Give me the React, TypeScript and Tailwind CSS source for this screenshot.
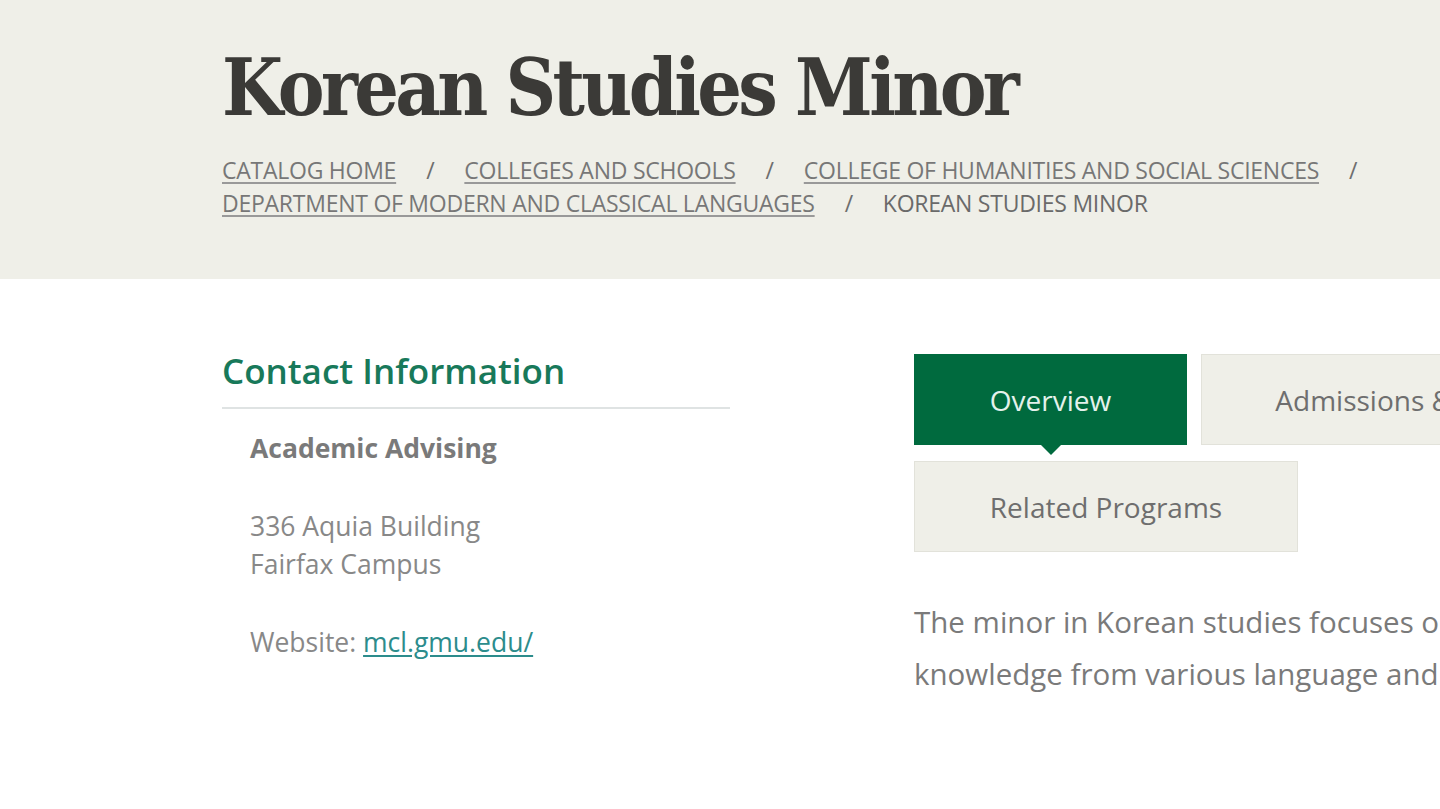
import React from "react";

const crumbs = [
  "CATALOG HOME",
  "COLLEGES AND SCHOOLS",
  "COLLEGE OF HUMANITIES AND SOCIAL SCIENCES",
  "DEPARTMENT OF MODERN AND CLASSICAL LANGUAGES",
];

function Sep() {
  return <span className="mx-[30px] text-[#6e6e6e] no-underline">/</span>;
}

export default function App() {
  return (
    <div className="w-[1440px] h-[809px] overflow-hidden bg-white" style={{ fontFamily: '"Open Sans", sans-serif' }}>
      <header className="h-[279px] bg-[#efefe8] pl-[222px] pt-[44px]">
        <h1
          className="text-[78px] leading-[88px] font-bold text-[#3b3a37] tracking-[-3.6px]"
          style={{ fontFamily: '"DejaVu Serif Condensed", "DejaVu Serif", serif' }}
        >
          Korean Studies Minor
        </h1>
        <nav className="mt-[22px] w-[1180px] text-[23px] leading-[33px] text-[#777] tracking-[-0.25px]">
          <a className="underline decoration-[#999] underline-offset-[3px]">{crumbs[0]}</a>
          <Sep />
          <a className="underline decoration-[#999] underline-offset-[3px]">{crumbs[1]}</a>
          <Sep />
          <a className="underline decoration-[#999] underline-offset-[3px]">{crumbs[2]}</a>
          <Sep />
          <br />
          <a className="underline decoration-[#999] underline-offset-[3px]">{crumbs[3]}</a>
          <Sep />
          <span className="text-[#6a6a6a]">KOREAN STUDIES MINOR</span>
        </nav>
      </header>
      <main className="flex pl-[222px] pt-[70px]">
        <aside className="w-[508px] shrink-0">
          <h2 className="text-[35px] leading-[44px] font-semibold text-[#18795a] pb-[14px] border-b-2 border-[#dfe3e3]">
            Contact Information
          </h2>
          <div className="pl-[28px] pt-[20px] text-[26.5px] text-[#888]">
            <p className="font-bold text-[#7a7a7a] leading-[38px]">Academic Advising</p>
            <p className="mt-[40px] leading-[38px]">
              336 Aquia Building
              <br />
              Fairfax Campus
            </p>
            <p className="mt-[40px] leading-[38px]">
              Website:{" "}
              <a className="text-[#2c8c8c] underline underline-offset-[3px]">mcl.gmu.edu/</a>
            </p>
          </div>
        </aside>
        <section className="ml-[184px] w-[900px] shrink-0 pt-[5px]">
          <div className="flex flex-wrap gap-x-[14px] gap-y-[16px] w-[760px]">
            <div className="relative w-[273px] h-[91px] bg-[#006a3e] flex items-center justify-center text-[28px] text-[#e4f2ec]">
              Overview
              <span className="absolute left-1/2 -translate-x-1/2 top-full w-0 h-0 border-l-[10px] border-r-[10px] border-t-[10px] border-l-transparent border-r-transparent border-t-[#006a3e]" />
            </div>
            <div className="w-[430px] h-[91px] bg-[#efefe8] border border-[#e2e2da] flex items-center justify-center text-[28px] text-[#6e6e6e] whitespace-nowrap">
              Admissions &amp; Policies
            </div>
            <div className="w-[384px] h-[91px] bg-[#efefe8] border border-[#e2e2da] flex items-center justify-center text-[28px] text-[#6e6e6e]">
              Related Programs
            </div>
          </div>
          <div className="mt-[44px] text-[29.5px] leading-[52px] text-[#7a7a7a] whitespace-nowrap">
            <p>The minor in Korean studies focuses on Korea's language, culture, and society, integrating</p>
            <p>knowledge from various language and area studies disciplines.</p>
          </div>
        </section>
      </main>
    </div>
  );
}
